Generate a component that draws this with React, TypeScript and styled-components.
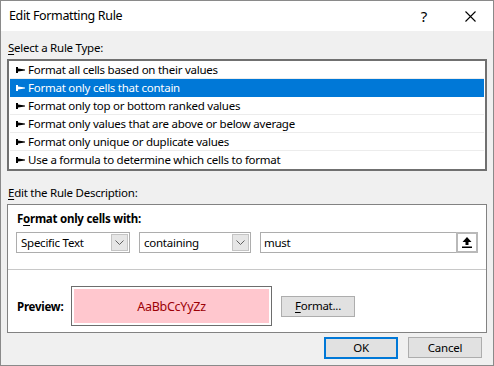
import React from 'react';
import styled, { createGlobalStyle } from 'styled-components';

const GlobalStyle = createGlobalStyle`
    html, body {
        margin: 0;
        padding: 0;
        background: #f0f0f0;
    }
    body {
        font-family: "Noto Sans", "Open Sans", "Liberation Sans", sans-serif;
        font-size: 11.5px;
        letter-spacing: -0.25px;
        color: #000;
    }
`;

const Window = styled.div`
    width: 494px;
    height: 366px;
    box-sizing: border-box;
    border: 1px solid #8a8a8a;
    background: #f0f0f0;
    display: flex;
    flex-direction: column;
`;

const TitleBar = styled.div`
    height: 30px;
    background: #fff;
    display: flex;
    align-items: center;
    padding-left: 8px;
`;

const TitleText = styled.div`
    flex: 1;
    font-size: 12.5px;
    letter-spacing: -0.35px;
    line-height: 18px;
`;

const TitleButton = styled.div`
    width: 46px;
    height: 30px;
    display: flex;
    align-items: center;
    justify-content: center;
    font-size: 15px;
`;

const Body = styled.div`
    flex: 1;
    padding: 0 6px;
    display: flex;
    flex-direction: column;
`;

const SectionLabel = styled.div<{ $top: number }>`
    margin-top: ${(p) => p.$top}px;
    margin-left: 1px;
    line-height: 16px;
    height: 16px;
`;

const Key = styled.span`
    text-decoration: underline;
    text-underline-offset: 2px;
`;

const ListBox = styled.div`
    margin-top: 3px;
    border: 2px solid #707070;
    background: #fff;
    padding: 0 1px;
`;

const ListRow = styled.div<{ $selected?: boolean }>`
    height: 17px;
    border-bottom: 1px solid ${(p) => (p.$selected ? '#0078d7' : '#ececec')};
    background: ${(p) => (p.$selected ? '#0078d7' : '#fff')};
    color: ${(p) => (p.$selected ? '#fff' : '#000')};
    display: flex;
    align-items: center;
    padding-left: 6px;
    line-height: 16px;
    &:last-child {
        border-bottom-color: #fff;
    }
`;

const Bullet = styled.svg`
    width: 9px;
    height: 6px;
    margin-right: 3px;
    flex-shrink: 0;
`;

const GroupBox = styled.div`
    margin-top: 3px;
    height: 129px;
    box-sizing: border-box;
    border: 1px solid #828282;
    background: #fff;
    display: flex;
    flex-direction: column;
`;

const GroupHeading = styled.div`
    margin: 6px 0 0 9px;
    font-weight: bold;
    line-height: 16px;
`;

const ControlsRow = styled.div`
    margin: 5px 0 0 8px;
    display: flex;
    gap: 9px;
`;

const Combo = styled.div<{ $width: number }>`
    width: ${(p) => p.$width}px;
    height: 21px;
    box-sizing: border-box;
    border: 1px solid #adadad;
    background: #fff;
    display: flex;
    align-items: center;
    padding-left: 4px;
`;

const ComboText = styled.div`
    flex: 1;
    line-height: 16px;
`;

const ComboButton = styled.div`
    width: 17px;
    height: 17px;
    margin-right: 1px;
    box-sizing: border-box;
    border: 1px solid #c4c4c4;
    background: #e6e6e6;
    display: flex;
    align-items: center;
    justify-content: center;
`;

const TextBox = styled.div`
    width: 218px;
    height: 21px;
    box-sizing: border-box;
    border: 1px solid #adadad;
    display: flex;
    align-items: center;
    padding-left: 3px;
`;

const CollapseButton = styled.div`
    width: 22px;
    height: 21px;
    margin-right: -1px;
    box-sizing: border-box;
    border: 2px solid #b9b9b9;
    background: #fff;
    display: flex;
    align-items: center;
    justify-content: center;
`;

const Divider = styled.div`
    margin-top: 16px;
    height: 1px;
    background: #c8c8c8;
`;

const PreviewRow = styled.div`
    margin: 16px 0 0 9px;
    display: flex;
    align-items: center;
`;

const PreviewLabel = styled.div`
    width: 54px;
    font-weight: bold;
`;

const PreviewFrame = styled.div`
    width: 201px;
    height: 40px;
    box-sizing: border-box;
    border: 1px solid #6d6d6d;
    padding: 2px;
    background: #fff;
`;

const PreviewSample = styled.div`
    height: 100%;
    background: #ffc7ce;
    color: #9c0006;
    font-size: 12.5px;
    display: flex;
    align-items: center;
    justify-content: center;
`;

const PushButton = styled.div<{ $default?: boolean }>`
    width: 74px;
    height: ${(p) => (p.$default ? 22 : 21)}px;
    box-sizing: border-box;
    border: ${(p) => (p.$default ? '2px solid #0078d7' : '1px solid #adadad')};
    background: #e1e1e1;
    display: flex;
    align-items: center;
    justify-content: center;
    line-height: 16px;
`;

const FormatButton = styled(PushButton)`
    margin-left: 9px;
`;

const Footer = styled.div`
    margin: 4px 5px 0 0;
    display: flex;
    justify-content: flex-end;
    gap: 10px;
`;

const RULE_TYPES = [
    'Format all cells based on their values',
    'Format only cells that contain',
    'Format only top or bottom ranked values',
    'Format only values that are above or below average',
    'Format only unique or duplicate values',
    'Use a formula to determine which cells to format',
];

const Chevron = () => (
    <svg width="9" height="5" viewBox="0 0 9 5">
        <path d="M0.5 0.5 L4.5 4.5 L8.5 0.5" fill="none" stroke="#606060" strokeWidth="1" />
    </svg>
);

const App: React.FC = () => {
    const selected = 1;

    return (
        <>
            <GlobalStyle />
            <Window>
                <TitleBar>
                    <TitleText>Edit Formatting Rule</TitleText>
                    <TitleButton>?</TitleButton>
                    <TitleButton>
                        <svg width="11" height="11" viewBox="0 0 11 11">
                            <path d="M0.5 0.5 L10.5 10.5 M10.5 0.5 L0.5 10.5" stroke="#000" strokeWidth="1.1" />
                        </svg>
                    </TitleButton>
                </TitleBar>
                <Body>
                    <SectionLabel $top={9}><Key>S</Key>elect a Rule Type:</SectionLabel>
                    <ListBox>
                        {RULE_TYPES.map((text, i) => (
                            <ListRow key={text} $selected={i === selected}>
                                <Bullet viewBox="0 0 9 6">
                                    <polygon
                                        points="0,0 2,0 2,1.6 9,2.5 9,3.5 2,4.4 2,6 0,6"
                                        fill={i === selected ? '#fff' : '#000'}
                                    />
                                </Bullet>
                                {text}
                            </ListRow>
                        ))}
                    </ListBox>
                    <SectionLabel $top={14}><Key>E</Key>dit the Rule Description:</SectionLabel>
                    <GroupBox>
                        <GroupHeading>F<Key>o</Key>rmat only cells with:</GroupHeading>
                        <ControlsRow>
                            <Combo $width={114}>
                                <ComboText>Specific Text</ComboText>
                                <ComboButton><Chevron /></ComboButton>
                            </Combo>
                            <Combo $width={112}>
                                <ComboText>containing</ComboText>
                                <ComboButton><Chevron /></ComboButton>
                            </Combo>
                            <TextBox>
                                <ComboText>must</ComboText>
                                <CollapseButton>
                                    <svg width="10" height="11" viewBox="0 0 10 11">
                                        <path d="M5 0 L9.5 5 L6.5 5 L6.5 8 L3.5 8 L3.5 5 L0.5 5 Z" fill="#000" />
                                        <rect x="0" y="9.5" width="10" height="1.5" fill="#000" />
                                    </svg>
                                </CollapseButton>
                            </TextBox>
                        </ControlsRow>
                        <Divider />
                        <PreviewRow>
                            <PreviewLabel>Preview:</PreviewLabel>
                            <PreviewFrame>
                                <PreviewSample>AaBbCcYyZz</PreviewSample>
                            </PreviewFrame>
                            <FormatButton><Key>F</Key>ormat...</FormatButton>
                        </PreviewRow>
                    </GroupBox>
                    <Footer>
                        <PushButton $default>OK</PushButton>
                        <PushButton>Cancel</PushButton>
                    </Footer>
                </Body>
            </Window>
        </>
    );
};

export default App;
